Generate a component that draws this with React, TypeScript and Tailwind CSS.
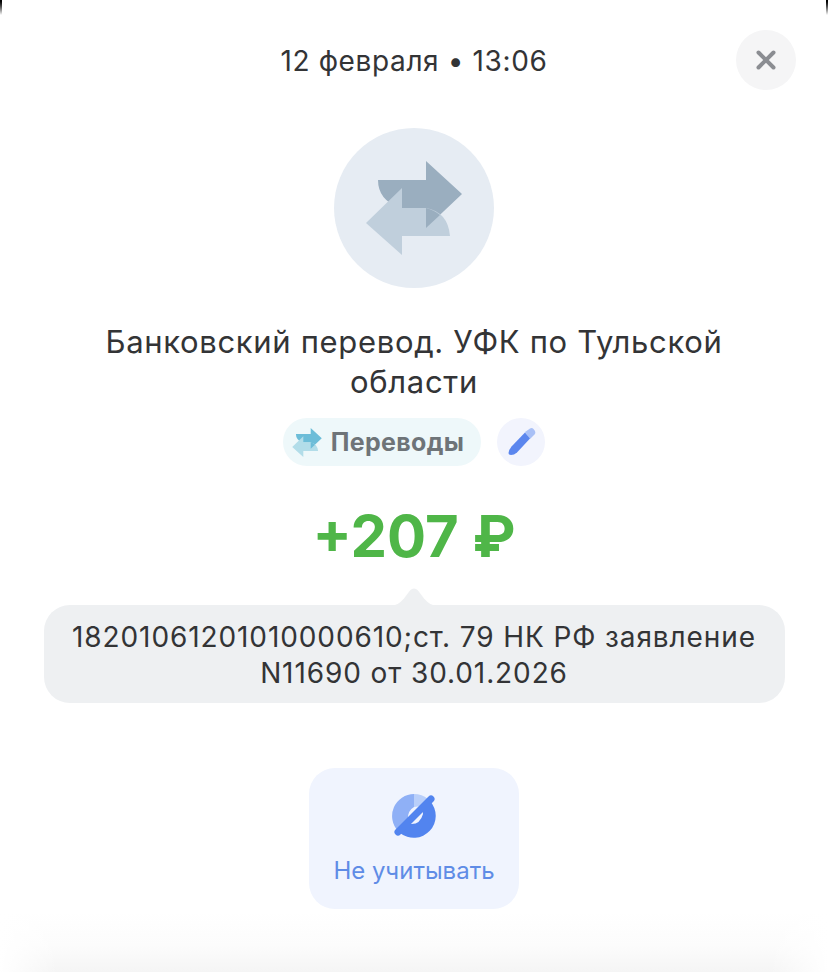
import React from "react";
import { X } from "lucide-react";

function TransferIcon({ dark, light, className }: { dark: string; light: string; className: string }) {
    return (
        <svg viewBox="28 30 104 100" className={className}>
            <path d="M44 52H92V33L128 66L92 100V80H66Q44 72 44 52Z" fill={dark} />
            <path d="M32 95L68 60V80H92Q114 84 116 108H68V127Z" fill={light} />
            <path d="M92 80V100L106 87Q100 82 92 80Z" fill={dark} />
        </svg>
    );
}

function PencilIcon() {
    return (
        <svg viewBox="0 0 48 48" className="h-12 w-12">
            <path d="M28 14L33 10.500Q35 9.500 36.500 11L38 13Q39 15 37.500 16.500L33 21Z" fill="#a9c0f6" />
            <path d="M28 14.500L33 20.500L20 34.500Q17 37 14 37Q11.500 37 11.500 35Q12 31.500 14.500 28.500Z" fill="#5b86ee" />
        </svg>
    );
}

function IgnoreIcon() {
    return (
        <svg viewBox="0 0 48 48" className="h-12 w-12">
            <path d="M24 2A22 22 0 0 0 8 39L18 29Q17 19 24 15Z" fill="#8fb0f6" />
            <path d="M24 2A22 22 0 0 1 38 7L31 15Q28 14 24 15Z" fill="#b9cffa" />
            <path d="M40 9A22 22 0 0 1 10 41L20 32Q30 33 33 22Q33 19 32 17Z" fill="#5284ef" />
            <path d="M8 40L41 7" stroke="#5284ef" strokeWidth="7" strokeLinecap="round" />
        </svg>
    );
}

export default function App() {
    return (
        <main className="relative flex h-[972px] w-[828px] flex-col items-center overflow-hidden bg-white font-['Inter',sans-serif] text-[#333436]">
            {/* sheet corners */}
            <div className="absolute left-0 top-0 h-[15px] w-[2px] bg-gradient-to-b from-black to-white" />
            <div className="absolute right-0 top-0 h-[15px] w-[2px] bg-gradient-to-b from-black to-white" />

            <header className="relative flex h-[120px] w-full justify-center pt-[43px]">
                <div className="text-[28px] leading-[36px] tracking-[0.62px]">12 февраля • 13:06</div>
                <button className="absolute right-[32px] top-[30px] flex h-[60px] w-[60px] items-center justify-center rounded-full bg-[#f5f5f6] text-[#8b8d92]">
                    <X size={30} strokeWidth={3.2} />
                </button>
            </header>

            <div className="mt-2 flex h-40 w-40 items-center justify-center rounded-full bg-[#e6ecf3]">
                <TransferIcon dark="#9aaebf" light="#c0cfdc" className="h-[100px] w-[104px]" />
            </div>

            <h1 className="mt-[34px] w-[680px] text-center text-[31px] font-normal leading-[40px] tracking-[0.67px]">
                Банковский перевод. УФК по Тульской области
            </h1>

            <div className="mt-[16px] flex items-center gap-4">
                <div className="flex h-12 items-center gap-2 rounded-full bg-[#eef8fa] pl-2 pr-[17px]">
                    <TransferIcon dark="#6cbdd8" light="#b2dde9" className="h-[31px] w-[32px]" />
                    <span className="text-[25px] font-bold leading-none tracking-[0.35px] text-[#6e7478]">Переводы</span>
                </div>
                <div className="flex h-12 w-12 items-center justify-center rounded-full bg-[#f2f4fd]">
                    <PencilIcon />
                </div>
            </div>

            <div className="mt-[30px] text-[58px] font-bold leading-[80px] text-[#4fb648]">+207 ₽</div>

            <div className="relative mt-[29px] w-[741px] rounded-[26px] bg-[#eef0f2] px-6 pb-[12px] pt-[14px] text-center text-[28px] leading-[36px] tracking-[0.9px]">
                <svg viewBox="0 0 44 18" className="absolute left-[348px] top-[-18px] h-[19px] w-[44px]">
                    <path d="M0 18Q6 18 12 11L18 3Q22 -1 26 3L32 11Q38 18 44 18Z" fill="#eef0f2" />
                </svg>
                18201061201010000610;ст. 79 НК РФ заявление N11690 от 30.01.2026
            </div>

            <button className="mt-[65px] flex h-[141px] w-[210px] flex-col items-center rounded-[26px] bg-[#f0f4fe] pt-[24px]">
                <IgnoreIcon />
                <span className="mt-[15px] text-[24px] leading-[32px] text-[#5f8ce6]">Не учитывать</span>
            </button>

            <div className="absolute bottom-0 left-0 h-[60px] w-full bg-[linear-gradient(to_right,#ffffff,transparent_7%,transparent_93%,#ffffff),linear-gradient(to_bottom,#ffffff,#fcfcfc_55%,#f5f5f5)]" />
        </main>
    );
}
